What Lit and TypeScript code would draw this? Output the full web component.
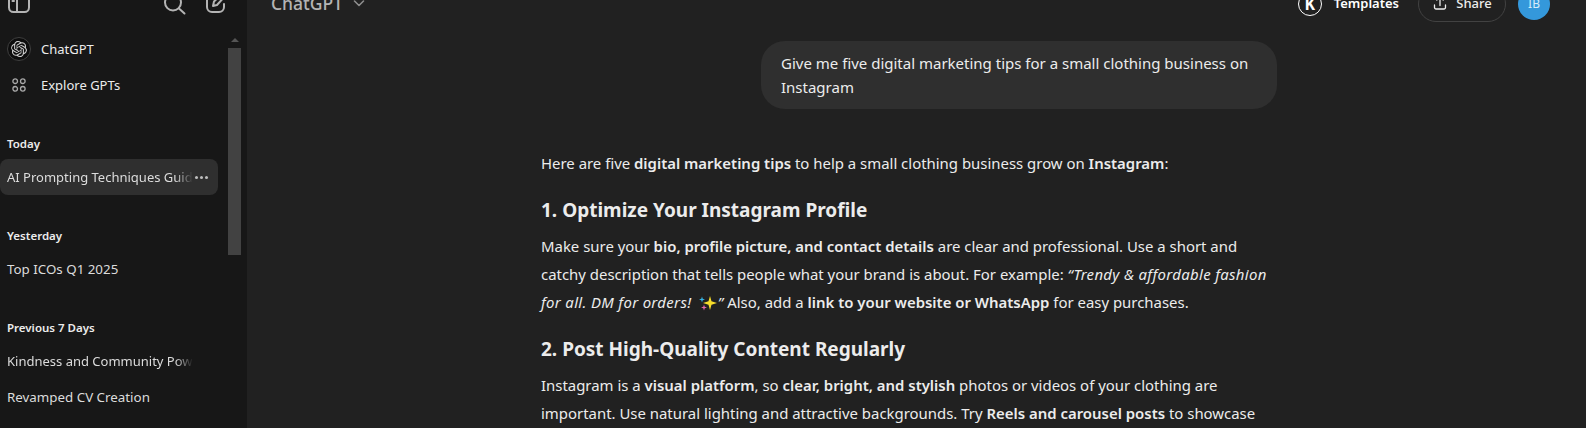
import { LitElement, html, css } from "lit";
import { customElement } from "lit/decorators.js";

const OPENAI = "M22.2819 9.8211a5.9847 5.9847 0 0 0-.5157-4.9108 6.0462 6.0462 0 0 0-6.5098-2.9A6.0651 6.0651 0 0 0 4.9807 4.1818a5.9847 5.9847 0 0 0-3.9977 2.9 6.0462 6.0462 0 0 0 .7427 7.0966 5.98 5.98 0 0 0 .511 4.9107 6.051 6.051 0 0 0 6.5146 2.9001A5.9847 5.9847 0 0 0 13.2599 24a6.0557 6.0557 0 0 0 5.7718-4.2058 5.9894 5.9894 0 0 0 3.9977-2.9001 6.0557 6.0557 0 0 0-.7475-7.0729zm-9.022 12.6081a4.4755 4.4755 0 0 1-2.8764-1.0408l.1419-.0804 4.7783-2.7582a.7948.7948 0 0 0 .3927-.6813v-6.7369l2.02 1.1686a.071.071 0 0 1 .038.052v5.5826a4.504 4.504 0 0 1-4.4945 4.4944zm-9.6607-4.1254a4.4708 4.4708 0 0 1-.5346-3.0137l.142.0852 4.783 2.7582a.7712.7712 0 0 0 .7806 0l5.8428-3.3685v2.3324a.0804.0804 0 0 1-.0332.0615L9.74 19.9502a4.4992 4.4992 0 0 1-6.1408-1.6464zM2.3408 7.8956a4.485 4.485 0 0 1 2.3655-1.9728V11.6a.7664.7664 0 0 0 .3879.6765l5.8144 3.3543-2.0201 1.1685a.0757.0757 0 0 1-.071 0l-4.8303-2.7865A4.504 4.504 0 0 1 2.3408 7.872zm16.5963 3.8558L13.1038 8.364 15.1192 7.2a.0757.0757 0 0 1 .071 0l4.8303 2.7913a4.4944 4.4944 0 0 1-.6765 8.1042v-5.6772a.79.79 0 0 0-.407-.667zm2.0107-3.0231l-.142-.0852-4.7735-2.7818a.7759.7759 0 0 0-.7854 0L9.409 9.2297V6.8974a.0662.0662 0 0 1 .0284-.0615l4.8303-2.7866a4.4992 4.4992 0 0 1 6.6802 4.66zM8.3065 12.863l-2.02-1.1638a.0804.0804 0 0 1-.038-.0567V6.0742a4.4992 4.4992 0 0 1 7.3757-3.4537l-.142.0805L8.704 5.459a.7948.7948 0 0 0-.3927.6813zm1.0976-2.3654l2.602-1.4998 2.6069 1.4998v2.9994l-2.5974 1.4997-2.6067-1.4997Z";

@customElement("app-root")
export class AppRoot extends LitElement {
  static styles = css`
    :host { display: flex; width: 1586px; height: 428px; overflow: hidden; background: #212121; color: #ececec; font-family: "Noto Sans", "Open Sans", sans-serif; }
    svg { display: block; flex: none; overflow: visible; }
    .side { width: 247px; flex: none; background: #171717; display: flex; height: 428px; overflow: hidden; }
    .side-main { width: 228px; flex: none; display: flex; flex-direction: column; }
    .tools { height: 28px; display: flex; align-items: flex-end; padding: 0 0 0 8px; margin-top: -15px; justify-content: space-between; flex: none; }
    .tools .right { display: flex; gap: 18px; }
    .navs { margin-top: 18px; }
    .nav { display: flex; align-items: center; gap: 10px; height: 36px; padding-left: 7px; font-size: 13px; color: #ececec; }
    .nav .ic { width: 24px; height: 24px; display: flex; align-items: center; justify-content: center; flex: none; position: relative; }
    .logo-ring { width: 24px; height: 24px; box-sizing: border-box; border: 1px solid #3f3f3f; border-radius: 50%; background: #0d0d0d; display: flex; align-items: center; justify-content: center; }
    .section { margin-top: 32px; }
    .label { font-size: 11.5px; font-weight: 600; color: #ececec; padding-left: 7px; height: 18px; line-height: 18px; margin-bottom: 6px; }
    .row { height: 36px; line-height: 36px; width: 218px; padding-left: 7px; box-sizing: border-box; font-size: 13.35px; color: #dcdcdc; border-radius: 8px; position: relative; white-space: nowrap; overflow: hidden; }
    .row .t { display: block; font-size: 13px; width: 186px; overflow: hidden; -webkit-mask-image: linear-gradient(to left, transparent 0, #000 18px); mask-image: linear-gradient(to left, transparent 0, #000 18px); }
    .row.active { background: #2f2f2f; }
    .dots { position: absolute; right: 10px; top: 17px; display: flex; gap: 2px; }
    .dots i { width: 3px; height: 3px; border-radius: 50%; background: #bdbdbd; display: block; }
    .bar { width: 13px; flex: none; position: relative; display: flex; flex-direction: column; }
    .track { margin-top: 48px; height: 207px; background: #424242; }
    .arrow { position: absolute; left: 3px; top: 38px; width: 0; height: 0; border-left: 4px solid transparent; border-right: 4px solid transparent; border-bottom: 4px solid #555; }
    .main { flex: 1; min-width: 0; display: flex; flex-direction: column; }
    .head { height: 36px; margin-top: -14px; flex: none; display: flex; align-items: center; justify-content: space-between; padding: 0 36px 0 24px; }
    .title { display: flex; align-items: center; gap: 9px; font-size: 17.5px; font-weight: 500; color: #b4b4b4; padding-bottom: 2px; }
    .hright { display: flex; align-items: center; }
    .kbox { width: 24px; height: 24px; border: 1px solid #fff; border-radius: 50%; box-sizing: border-box; margin-right: 12px; display: flex; align-items: center; justify-content: center; font-size: 16px; font-weight: 700; color: #fff; }
    .tpl { font-size: 13px; font-weight: 600; color: #fff; margin-right: 19px; padding-bottom: 3px; }
    .share { height: 36px; box-sizing: border-box; border: 1px solid #424242; border-radius: 18px; width: 88px; display: flex; align-items: center; justify-content: center; gap: 8px; font-size: 13px; font-weight: 500; color: #ececec; margin-right: 12px; padding-bottom: 2px; }
    .avatar { width: 32px; height: 32px; border-radius: 50%; background: #3498db; color: #d6ecfa; font-size: 12px; display: flex; align-items: center; justify-content: center; margin-top: -1px; }
    .col { width: 736px; margin-left: 294px; display: flex; flex-direction: column; font-size: 14.93px; }
    .bubble { align-self: flex-end; width: 516px; box-sizing: border-box; margin-top: 19px; background: #2f2f2f; border-radius: 24px; padding: 10px 20px; line-height: 24px; height: 68px; font-size: 15px; }
    p { margin: 0; line-height: 28px; }
    b { font-weight: 600; }
    em { letter-spacing: .34px; }
    .intro { margin-top: 40px; }
    h3 { margin: 18px 0 7px; font-size: 19px; line-height: 30px; font-weight: 700; }
    .sparkle { display: inline-block; vertical-align: -4px; margin: 0 1px 0 3px; }
  `;

  render() {
    return html`
      <aside class="side">
        <div class="side-main">
          <div class="tools">
            <svg width="22" height="24" viewBox="0 0 22 24" fill="none" stroke="#b4b4b4" stroke-width="2" stroke-linecap="round"><rect x="1" y="3" width="20" height="20" rx="4.500"/><path d="M9 3v20M4.500 8h1.500M4.500 12h1.500"/></svg>
            <div class="right">
              <svg width="24" height="24" viewBox="0 0 24 24" fill="none" stroke="#b4b4b4" stroke-width="2" stroke-linecap="round"><circle cx="11" cy="13.500" r="8"/><path d="M17 19.500l5.500 5"/></svg>
              <svg width="24" height="24" viewBox="0 0 24 24" fill="none" stroke="#b4b4b4" stroke-width="2" stroke-linecap="round" stroke-linejoin="round"><path d="M20 15v3a5 5 0 0 1-5 5H8a5 5 0 0 1-5-5V9a5 5 0 0 1 5-5h4"/><path d="M9 17l1-4.500L20 3l2.500 2.500L13 16z"/></svg>
            </div>
          </div>
          <div class="navs">
            <div class="nav"><span class="ic"><span class="logo-ring">
              <svg width="16" height="16" viewBox="0 0 24 24"><path d="${OPENAI}" fill="#d0d0d0"/></svg>
            </span></span>ChatGPT</div>
            <div class="nav"><span class="ic">
              <svg width="14" height="14" viewBox="0 0 14 14" fill="none" stroke="#a8a8a8" stroke-width="1.300"><circle cx="3.200" cy="3.200" r="2.300"/><circle cx="10.800" cy="3.200" r="2.300"/><circle cx="3.200" cy="10.800" r="2.300"/><circle cx="10.800" cy="10.800" r="2.300"/></svg>
            </span>Explore GPTs</div>
          </div>
          <div class="section">
            <div class="label">Today</div>
            <div class="row active"><span class="t">AI Prompting Techniques Guide</span><span class="dots"><i></i><i></i><i></i></span></div>
          </div>
          <div class="section">
            <div class="label">Yesterday</div>
            <div class="row">Top ICOs Q1 2025</div>
          </div>
          <div class="section">
            <div class="label">Previous 7 Days</div>
            <div class="row"><span class="t">Kindness and Community Power</span></div>
            <div class="row">Revamped CV Creation</div>
          </div>
        </div>
        <div class="bar"><div class="arrow"></div><div class="track"></div></div>
      </aside>
      <main class="main">
        <div class="head">
          <div class="title">ChatGPT
            <svg width="14" height="14" viewBox="0 0 14 14" fill="none" stroke="#8e8e8e" stroke-width="1.600" stroke-linecap="round" stroke-linejoin="round"><path d="M2.500 5l4.500 4.500L11.500 5"/></svg>
          </div>
          <div class="hright">
            <div class="kbox">K</div>
            <div class="tpl">Templates</div>
            <div class="share">
              <svg width="16" height="16" viewBox="0 0 16 16" fill="none" stroke="#ececec" stroke-width="1.300" stroke-linecap="round" stroke-linejoin="round"><path d="M8 10.500V2M4.800 5L8 1.800 11.200 5M2.500 10v2.500A1.500 1.500 0 0 0 4 14h8a1.500 1.500 0 0 0 1.500-1.500V10"/></svg>
              Share
            </div>
            <div class="avatar">IB</div>
          </div>
        </div>
        <div class="col">
          <div class="bubble">Give me five digital marketing tips for a small clothing business on Instagram</div>
          <p class="intro">Here are five <b>digital marketing tips</b> to help a small clothing business grow on <b>Instagram</b>:</p>
          <h3>1. Optimize Your Instagram Profile</h3>
          <p>Make sure your <b>bio, profile picture, and contact details</b> are clear and professional. Use a short and catchy description that tells people what your brand is about. For example: <em>“Trendy &amp; affordable fashion for all. DM for orders! <svg class="sparkle" width="18" height="18" viewBox="0 0 18 18"><path d="M11 2l1.500 5.200L18 9l-5.500 1.800L11 16l-1.500-5.200L4 9l5.500-1.800z" fill="#f7dc2a"/><path d="M3 2.500l.7 2.300L6 5.500l-2.300.7L3 8.500l-.7-2.300L0 5.500l2.300-.7z" fill="#35b6e8"/><path d="M5 10.500l.7 2.300 2.300.7-2.300.7L5 16.500l-.7-2.300-2.300-.7 2.300-.7z" fill="#e86aa8"/></svg>”</em> Also, add a <b>link to your website or WhatsApp</b> for easy purchases.</p>
          <h3>2. Post High-Quality Content Regularly</h3>
          <p>Instagram is a <b>visual platform</b>, so <b>clear, bright, and stylish</b> photos or videos of your clothing are important. Use natural lighting and attractive backgrounds. Try <b>Reels and carousel posts</b> to showcase</p>
        </div>
      </main>
    `;
  }
}
